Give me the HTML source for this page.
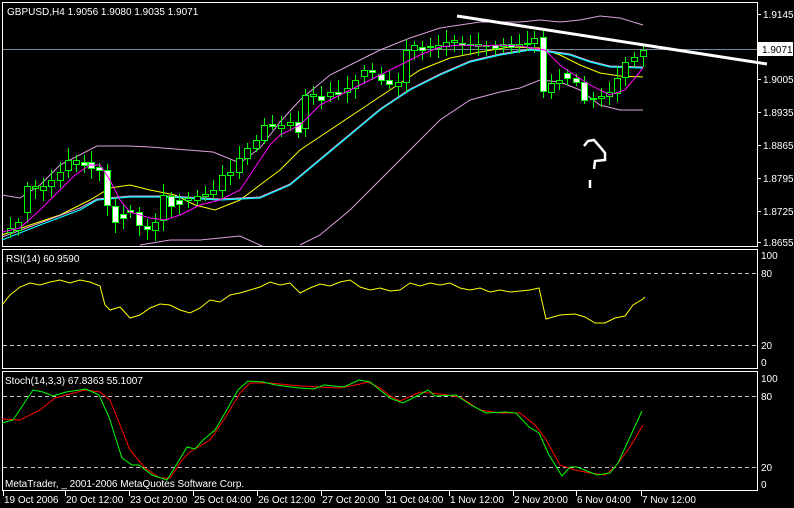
<!DOCTYPE html>
<html><head><meta charset="utf-8"><style>
html,body{margin:0;padding:0;background:#000;width:794px;height:508px;overflow:hidden}
svg{display:block}
text{font-family:"Liberation Sans",sans-serif;font-size:10px;fill:#fff}
</style></head><body>
<svg id="s" width="794" height="508" viewBox="0 0 794 508" xmlns="http://www.w3.org/2000/svg" shape-rendering="crispEdges">
<rect width="794" height="508" fill="#000"/>
<rect x="2.5" y="2.5" width="755" height="244" fill="none" stroke="#fff"/>
<rect x="2.5" y="249.5" width="755" height="119" fill="none" stroke="#fff"/>
<rect x="2.5" y="371.5" width="755" height="119" fill="none" stroke="#fff"/>
<line x1="3" y1="49.5" x2="757" y2="49.5" stroke="#778899"/>
<text x="7" y="15">GBPUSD,H4  1.9056 1.9080 1.9035 1.9071</text>
<g>
<text x="763" y="18">1.9145</text>
<text x="763" y="83">1.9005</text>
<text x="763" y="116">1.8935</text>
<text x="763" y="149">1.8865</text>
<text x="763" y="182">1.8795</text>
<text x="763" y="215">1.8725</text>
<text x="763" y="246">1.8655</text>
<rect x="758" y="42" width="35" height="14" fill="#fff"/>
<text x="762" y="53" style="fill:#000">1.9071</text>
</g>
<g stroke="#fff"><line x1="757" y1="14.5" x2="761" y2="14.5"/><line x1="757" y1="79.5" x2="761" y2="79.5"/><line x1="757" y1="112.5" x2="761" y2="112.5"/><line x1="757" y1="145.5" x2="761" y2="145.5"/><line x1="757" y1="178.5" x2="761" y2="178.5"/><line x1="757" y1="211.5" x2="761" y2="211.5"/><line x1="757" y1="242.5" x2="761" y2="242.5"/></g>
<g id="ind" fill="none" shape-rendering="auto" stroke-width="1">
<polyline stroke="#dda0dd" points="2,195 20,198 40,185 60,165 97,146 128,146 150,147 213,152 240,163 260,148 280,122 300,100 330,75 360,60 380,50 410,38 440,28 480,22 520,22 540,20 560,22 580,20 600,16 620,18 643,25"/>
<polyline stroke="#dda0dd" points="140,245 170,240 200,240 240,236 262,246"/>
<polyline stroke="#dda0dd" points="300,245 320,235 350,210 380,180 410,150 440,120 470,100 500,92 520,88 540,80 560,82 580,90 600,105 620,110 643,110"/>
<polyline stroke="#ffff00" points="2,235 30,225 60,215 90,200 110,188 130,185 150,190 175,195 195,205 215,210 240,200 260,185 280,170 300,150 330,130 360,110 390,90 420,70 450,58 480,52 510,47 540,48 560,55 580,65 600,73 620,76 643,77"/>
<polyline stroke="#dda0dd" stroke-width="1" points="2,237 40,223 80,208 97,199 130,196 170,196 220,199 260,197 290,184 320,159 350,134 380,109 410,89 440,74 470,61 500,54 530,49 550,51 570,54 590,61 610,66 643,67"/>
<polyline stroke="#00ffff" stroke-width="1.2" points="2,240 40,225 80,210 97,200 130,197 170,197 220,200 260,198 290,185 320,160 350,135 380,110 410,90 440,75 470,62 500,55 530,50 550,52 570,55 590,62 610,67 643,68"/>
</g>
<g id="candles"></g>
<g shape-rendering="auto" fill="none">
<polyline stroke="#ff00ff" points="2,232 20,228 40,210 60,190 75,175 90,165 100,165 110,180 120,200 130,212 150,218 165,220 180,215 200,205 220,200 240,190 250,175 260,160 270,145 280,135 300,125 320,105 340,95 360,85 380,75 400,65 420,55 440,47 460,45 480,46 500,45 520,46 545,50 560,65 570,72 590,85 610,95 625,90 643,68"/>
<line x1="457" y1="16" x2="767" y2="64" stroke="#fff" stroke-width="3"/>
<path d="M584,146 L588,141 L594,140 L601,148 L605,153 L605,160 L595,161 L594,169 M590,180 L590,188" stroke="#fff" stroke-width="2.5"/>
</g>
<text x="6" y="262">RSI(14) 60.9590</text>
<g stroke="#c0c0c0" stroke-dasharray="4,3"><line x1="3" y1="273.5" x2="757" y2="273.5"/><line x1="3" y1="345.5" x2="757" y2="345.5"/></g>
<text x="761" y="259">100</text><text x="761" y="277">80</text><text x="761" y="349">20</text><text x="761" y="366">0</text>
<polyline shape-rendering="auto" fill="none" stroke="#ffff00" points="2,305 10,295 20,287 30,283 40,285 50,282 60,280 70,283 80,280 90,282 100,286 105,305 110,310 120,307 130,318 140,315 150,308 160,304 170,305 180,310 190,313 200,308 210,300 220,302 230,295 240,293 250,290 260,287 270,282 280,285 290,283 300,293 310,288 320,284 330,286 340,282 350,280 360,287 370,290 380,288 390,291 400,290 410,283 420,286 430,283 440,285 450,283 460,288 470,290 480,288 490,292 500,290 510,292 520,291 530,290 539,288 546,319 560,315 575,314 585,317 595,323 605,323 615,318 625,316 633,305 643,299 645,297"/>
<text x="5" y="384">Stoch(14,3,3) 67.8363 55.1007</text>
<g stroke="#c0c0c0" stroke-dasharray="4,3"><line x1="3" y1="396.5" x2="757" y2="396.5"/><line x1="3" y1="467.5" x2="757" y2="467.5"/></g>
<text x="761" y="382">100</text><text x="761" y="400">80</text><text x="761" y="471">20</text><text x="761" y="488">0</text>
<text x="5" y="487">MetaTrader, _ 2001-2006 MetaQuotes Software Corp.</text>
<g shape-rendering="auto" fill="none">
<polyline stroke="#ff0000" points="2,419 20,420 40,410 55,398 85,390 100,392 110,400 118,420 130,450 145,468 160,478 170,478 182,460 190,452 210,440 225,418 240,393 250,383 270,383 300,386 340,388 360,384 368,382 380,388 390,396 400,401 420,392 440,394 460,397 480,410 500,413 520,413 535,425 545,438 560,465 575,470 590,473 605,475 615,467 630,447 643,425"/>
<polyline stroke="#00ff00" points="2,423 13,420 23,405 33,390 43,392 53,396 66,392 86,389 99,395 109,417 122,458 132,465 139,465 152,475 167,480 175,467 187,447 195,449 203,440 215,430 225,413 238,390 248,381 263,382 276,385 299,388 314,389 324,385 344,387 359,380 370,382 380,390 390,398 403,403 415,397 428,390 435,396 456,395 471,405 486,413 506,412 516,413 529,427 539,433 549,455 562,476 570,467 577,467 597,475 610,473 618,463 630,437 642,411"/>
</g>
<g id="taxis"></g>
</svg>
<script>
var NS="http://www.w3.org/2000/svg";
var ta=document.getElementById("taxis");
[["19 Oct 2006",4],["20 Oct 12:00",66],["23 Oct 20:00",130],["25 Oct 04:00",194],["26 Oct 12:00",258],["27 Oct 20:00",322],["31 Oct 04:00",386],["1 Nov 12:00",450],["2 Nov 20:00",514],["6 Nov 04:00",577],["7 Nov 12:00",642]].forEach(function(a){
 var t=document.createElementNS(NS,"text");t.setAttribute("x",a[1]);t.setAttribute("y",503);t.textContent=a[0];ta.appendChild(t);
 var l=document.createElementNS(NS,"line");l.setAttribute("x1",a[1]-0.5);l.setAttribute("x2",a[1]-0.5);l.setAttribute("y1",491);l.setAttribute("y2",496);l.setAttribute("stroke","#fff");ta.appendChild(l);
});
var C=[[10,232,228],[18,230,222],[27,212,186],[35,188,186],[43,190,186],[51,186,180],[60,180,172],[68,170,160],[76,164,160],[84,162,165],[91,162,168],[99,167,170],[107,170,205],[115,206,222],[123,214,218],[130,210,212],[139,212,225],[147,226,229],[155,230,222],[163,220,195],[171,196,206],[179,200,204],[188,200,198],[197,200,196],[205,196,194],[213,194,190],[222,190,175],[230,175,172],[239,172,158],[247,158,148],[256,148,140],[264,140,125],[272,124,126],[281,128,125],[290,125,122],[298,122,132],[305,128,95],[313,96,94],[321,96,100],[330,96,92],[338,92,94],[347,92,88],[355,88,80],[364,76,70],[372,70,72],[381,74,80],[389,80,84],[398,86,82],[406,82,50],[414,50,45],[422,47,50],[430,47,46],[438,48,45],[446,46,42],[454,42,40],[462,43,45],[470,45,44],[478,46,44],[486,46,45],[495,45,48],[503,46,44],[511,44,47],[519,46,44],[527,44,43],[534,43,38],[543,37,91],[551,92,83],[559,83,80],[567,73,78],[576,78,82],[584,82,100],[593,99,98],[601,98,96],[609,96,92],[617,93,78],[625,77,62],[634,61,57],[643,56,50]];
var g=document.getElementById("candles");
C.forEach(function(c){
 var x=c[0],o=c[1],cl=c[2],top=Math.min(o,cl),bot=Math.max(o,cl);
 var h=top-4-((x*7)%9),l=bot+4+((x*5)%8);
 var w=document.createElementNS(NS,"line");w.setAttribute("x1",x+0.5);w.setAttribute("x2",x+0.5);w.setAttribute("y1",h);w.setAttribute("y2",l);w.setAttribute("stroke","#00ff00");g.appendChild(w);
 var r=document.createElementNS(NS,"rect");r.setAttribute("x",x-2.5);r.setAttribute("y",top+0.5);r.setAttribute("width",6);r.setAttribute("height",Math.max(1,bot-top));
 r.setAttribute("fill",cl>o?"#fff":"#000");r.setAttribute("stroke","#00ff00");g.appendChild(r);
});
</script>
</body></html>
